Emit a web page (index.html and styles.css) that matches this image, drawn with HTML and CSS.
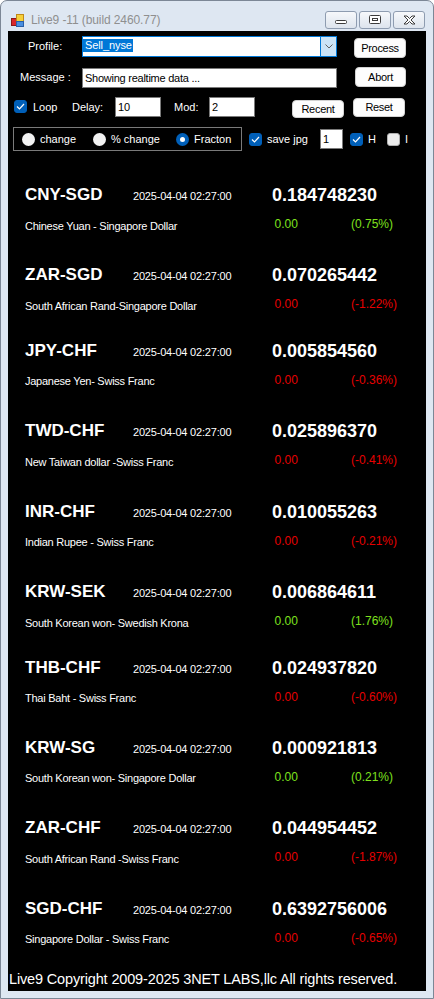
FILE: index.html
```html
<!DOCTYPE html>
<html lang="en">
<head>
  <meta charset="UTF-8">
  <title>Live9 -11 (build 2460.77)</title>
  <meta name="viewport" content="width=device-width, initial-scale=1.0">
  <link rel="stylesheet" href="styles.css">
</head>
<body>

  <div class="window">
    <div class="titlebar">
      <svg class="app-icon" width="14" height="16" viewBox="0 0 14 16">
        <rect x="0.5" y="6.5" width="5" height="7" fill="#d9262a" stroke="#8b1a1a"/>
        <rect x="5.5" y="2.5" width="7" height="7" fill="#f6d03a" stroke="#c08a1a"/>
        <rect x="5.5" y="9.5" width="7" height="5" fill="#4a8fe0" stroke="#2a5fa8"/>
      </svg>
      <span class="title">Live9 -11 (build 2460.77)</span>
      <div class="caption">
        <span class="cap-btn">
          <svg width="12" height="10" viewBox="0 0 12 10"><rect x="0.5" y="5.5" width="11" height="3" rx="1" fill="#fff" stroke="#3c3c3c"/></svg>
        </span>
        <span class="cap-btn">
          <svg width="12" height="10" viewBox="0 0 12 10"><rect x="0.5" y="0.5" width="11" height="8" rx="1" fill="#fff" stroke="#3c3c3c"/><rect x="3.5" y="3.5" width="5" height="2" fill="none" stroke="#3c3c3c"/></svg>
        </span>
        <span class="cap-btn">
          <svg width="13" height="10" viewBox="0 0 13 10"><path d="M1 1h3l2.5 2.5L9 1h3L8 5l4 4H9L6.5 6.5 4 9H1l4-4z" fill="#fff" stroke="#3c3c3c" stroke-linejoin="round"/></svg>
        </span>
      </div>
    </div>

    <div class="client">
      <div class="row row-profile">
        <span class="lbl lbl-profile">Profile:</span>
        <div class="combo">
          <span class="combo-text"><span class="sel">Sell_nyse</span></span>
          <span class="combo-drop">
            <svg width="8" height="5" viewBox="0 0 8 5"><path d="M0.5 0.5L4 4L7.5 0.5" fill="none" stroke="#606060"/></svg>
          </span>
        </div>
        <span class="btn btn-process">Process</span>
      </div>

      <div class="row row-msg">
        <span class="lbl lbl-msg">Message :</span>
        <div class="field field-msg">Showing realtime data ...</div>
        <span class="btn btn-abort">Abort</span>
      </div>

      <div class="row row-opts">
        <span class="check checked check-loop">
          <svg width="9" height="7" viewBox="0 0 9 7"><path d="M1 3.5L3.5 6L8 1" fill="none" stroke="#fff" stroke-width="1.2"/></svg>
        </span>
        <span class="lbl lbl-loop">Loop</span>
        <span class="lbl lbl-delay">Delay:</span>
        <div class="field field-num">10</div>
        <span class="lbl lbl-mod">Mod:</span>
        <div class="field field-num">2</div>
        <span class="btn btn-recent">Recent</span>
        <span class="btn btn-reset">Reset</span>
      </div>

      <div class="row row-mode">
        <div class="group">
          <span class="opt opt-change"><span class="radio"></span>change</span>
          <span class="opt opt-pct"><span class="radio"></span>% change</span>
          <span class="opt"><span class="radio on"></span>Fracton</span>
        </div>
        <span class="opt opt-save">
          <span class="check checked"><svg width="9" height="7" viewBox="0 0 9 7"><path d="M1 3.5L3.5 6L8 1" fill="none" stroke="#fff" stroke-width="1.2"/></svg></span>
          save jpg
        </span>
        <div class="field field-count">1</div>
        <span class="opt opt-h">
          <span class="check checked"><svg width="9" height="7" viewBox="0 0 9 7"><path d="M1 3.5L3.5 6L8 1" fill="none" stroke="#fff" stroke-width="1.2"/></svg></span>
          H
        </span>
        <span class="opt"><span class="check"></span>I</span>
      </div>

      <div class="quotes">
        <div class="quote">
          <div class="q-top"><span class="pair">CNY-SGD</span><span class="stamp">2025-04-04 02:27:00</span><span class="rate">0.184748230</span></div>
          <div class="q-bottom"><span class="desc">Chinese Yuan - Singapore Dollar</span><span class="chg up">0.00</span><span class="pct up">(0.75%)</span></div>
        </div>
        <div class="quote tight">
          <div class="q-top"><span class="pair">ZAR-SGD</span><span class="stamp">2025-04-04 02:27:00</span><span class="rate">0.070265442</span></div>
          <div class="q-bottom"><span class="desc">South African Rand-Singapore Dollar</span><span class="chg down">0.00</span><span class="pct down">(-1.22%)</span></div>
        </div>
        <div class="quote">
          <div class="q-top"><span class="pair">JPY-CHF</span><span class="stamp">2025-04-04 02:27:00</span><span class="rate">0.005854560</span></div>
          <div class="q-bottom"><span class="desc">Japanese Yen- Swiss Franc</span><span class="chg down">0.00</span><span class="pct down">(-0.36%)</span></div>
        </div>
        <div class="quote">
          <div class="q-top"><span class="pair">TWD-CHF</span><span class="stamp">2025-04-04 02:27:00</span><span class="rate">0.025896370</span></div>
          <div class="q-bottom"><span class="desc">New Taiwan dollar -Swiss Franc</span><span class="chg down">0.00</span><span class="pct down">(-0.41%)</span></div>
        </div>
        <div class="quote">
          <div class="q-top"><span class="pair">INR-CHF</span><span class="stamp">2025-04-04 02:27:00</span><span class="rate">0.010055263</span></div>
          <div class="q-bottom"><span class="desc">Indian Rupee - Swiss Franc</span><span class="chg down">0.00</span><span class="pct down">(-0.21%)</span></div>
        </div>
        <div class="quote tight">
          <div class="q-top"><span class="pair">KRW-SEK</span><span class="stamp">2025-04-04 02:27:00</span><span class="rate">0.006864611</span></div>
          <div class="q-bottom"><span class="desc">South Korean won- Swedish Krona</span><span class="chg up">0.00</span><span class="pct up">(1.76%)</span></div>
        </div>
        <div class="quote">
          <div class="q-top"><span class="pair">THB-CHF</span><span class="stamp">2025-04-04 02:27:00</span><span class="rate">0.024937820</span></div>
          <div class="q-bottom"><span class="desc">Thai Baht - Swiss Franc</span><span class="chg down">0.00</span><span class="pct down">(-0.60%)</span></div>
        </div>
        <div class="quote">
          <div class="q-top"><span class="pair">KRW-SG</span><span class="stamp">2025-04-04 02:27:00</span><span class="rate">0.000921813</span></div>
          <div class="q-bottom"><span class="desc">South Korean won- Singapore Dollar</span><span class="chg up">0.00</span><span class="pct up">(0.21%)</span></div>
        </div>
        <div class="quote">
          <div class="q-top"><span class="pair">ZAR-CHF</span><span class="stamp">2025-04-04 02:27:00</span><span class="rate">0.044954452</span></div>
          <div class="q-bottom"><span class="desc">South African Rand -Swiss Franc</span><span class="chg down">0.00</span><span class="pct down">(-1.87%)</span></div>
        </div>
        <div class="quote">
          <div class="q-top"><span class="pair">SGD-CHF</span><span class="stamp">2025-04-04 02:27:00</span><span class="rate">0.6392756006</span></div>
          <div class="q-bottom"><span class="desc">Singapore Dollar - Swiss Franc</span><span class="chg down">0.00</span><span class="pct down">(-0.65%)</span></div>
        </div>
      </div>

      <div class="footer">Live9 Copyright 2009-2025 3NET LABS,llc All rights reserved.</div>
    </div>
  </div>

</body>
</html>
```

FILE: styles.css
```css
* {
  box-sizing: border-box;
}

body {
  margin: 0;
  font-family: "Liberation Sans", Arial, sans-serif;
  background: #fff;
}

.window {
  width: 434px;
  height: 999px;
  border: 1px solid #7c8796;
  border-radius: 7px 7px 0 0;
  background: #dee7f2;
  padding: 0 7px 7px;
  display: flex;
  flex-direction: column;
}

/* title bar */
.titlebar {
  height: 30px;
  padding-top: 7px;
  display: flex;
  align-items: center;
}

.app-icon {
  margin-left: 3px;
}

.title {
  margin-left: 6px;
  font-size: 12px;
  color: #8f8f8f;
  letter-spacing: -0.1px;
}

.caption {
  margin-left: auto;
  margin-right: 1px;
  display: flex;
  gap: 2px;
}

.cap-btn {
  width: 32px;
  height: 18px;
  border: 1px solid #8e9cb0;
  border-radius: 3px;
  background: linear-gradient(#f6f8fb, #dde4ed);
  display: flex;
  align-items: center;
  justify-content: center;
}

/* client area */
.client {
  flex: 1;
  background: #000;
  color: #fff;
  font-size: 11px;
  line-height: 13px;
  overflow: hidden;
}

.row {
  display: flex;
  align-items: flex-start;
}

.lbl {
  margin-top: 4px;
}

.btn {
  background: #fdfdfd;
  border: 1px solid #d2d2d2;
  border-radius: 4px;
  color: #000;
  font-size: 11px;
  letter-spacing: -0.3px;
  display: flex;
  align-items: center;
  justify-content: center;
}

.field {
  background: #fff;
  color: #000;
  border: 1px solid #7a7a7a;
  height: 20px;
  padding: 3px 0 0 2px;
}

.row-profile {
  margin-top: 5px;
  height: 22px;
}

.lbl-profile {
  margin-left: 20px;
  width: 54px;
}

.combo {
  width: 255px;
  height: 21px;
  border: 1px solid #0078d7;
  background: #fff;
  display: flex;
}

.combo-text {
  flex: 1;
  padding: 2px 0 0 0;
}

.sel {
  display: inline-block;
  background: #0078d7;
  color: #fff;
  padding: 0 1px 0 2px;
  letter-spacing: -0.1px;
}

.combo-drop {
  width: 16px;
  border-left: 1px solid #0078d7;
  background: #cce4f7;
  display: flex;
  align-items: center;
  justify-content: center;
}

.btn-process {
  margin: 2px 0 0 17px;
  width: 52px;
  height: 20px;
}

.row-msg {
  margin-top: 9px;
  height: 21px;
}

.lbl-msg {
  margin-left: 12px;
  width: 62px;
}

.field-msg {
  width: 255px;
  margin-top: 1px;
  letter-spacing: -0.25px;
}

.btn-abort {
  margin-left: 18px;
  width: 51px;
  height: 20px;
}

.row-opts {
  margin-top: 9px;
  height: 21px;
}

.check {
  width: 13px;
  height: 13px;
  border-radius: 3px;
  background: #ececec;
  border: 1px solid #b0b0b0;
  display: flex;
  align-items: center;
  justify-content: center;
  flex-shrink: 0;
}

.check.checked {
  background: #005fb8;
  border-color: #005fb8;
}

.check-loop {
  margin: 3px 0 0 6px;
}

.lbl-loop {
  margin-left: 6px;
  width: 39px;
}

.lbl-delay {
  width: 43px;
}

.field-num {
  width: 46px;
}

.lbl-mod {
  margin-left: 13px;
  width: 35px;
}

.btn-recent {
  margin: 3px 0 0 37px;
  width: 52px;
  height: 18px;
}

.btn-reset {
  margin: 1px 0 0 9px;
  width: 52px;
  height: 19px;
}

.row-mode {
  margin-top: 9px;
  height: 24px;
  align-items: center;
}

.group {
  margin-left: 5px;
  width: 229px;
  height: 24px;
  border: 1px solid #7a7a7a;
  padding-left: 8px;
  display: flex;
  align-items: center;
}

.opt {
  display: flex;
  align-items: center;
  gap: 5px;
}

.opt-change {
  width: 71px;
}

.opt-pct {
  width: 83px;
}

.radio {
  width: 13px;
  height: 13px;
  border-radius: 50%;
  background: #f2f2f2;
  display: flex;
  align-items: center;
  justify-content: center;
}

.radio.on {
  background: #005fb8;
}

.radio.on::after {
  content: "";
  width: 5px;
  height: 5px;
  border-radius: 50%;
  background: #fff;
}

.opt-save {
  margin-left: 7px;
  width: 71px;
}

.field-count {
  width: 23px;
}

.opt-h {
  margin-left: 7px;
  width: 37px;
}

/* quotes */
.quotes {
  margin-top: 34px;
}

.quote {
  height: 80.4px;
  padding-left: 17px;
  display: flex;
  flex-direction: column;
}

.quote.tight {
  height: 75.5px;
}

.quote:last-child {
  height: 72px;
}

.q-top {
  display: flex;
  align-items: flex-start;
  height: 20px;
}

.pair {
  width: 108px;
  font-size: 17px;
  font-weight: bold;
  line-height: 20px;
}

.stamp {
  width: 139px;
  margin-top: 5px;
  letter-spacing: -0.2px;
}

.rate {
  font-size: 18px;
  font-weight: bold;
  line-height: 20px;
}

.q-bottom {
  display: flex;
  align-items: flex-start;
  margin-top: 12px;
}

.desc {
  width: 249.5px;
  margin-top: 2.5px;
  letter-spacing: -0.25px;
}

.chg {
  width: 76.5px;
  font-size: 12px;
  line-height: 14px;
}

.pct {
  font-size: 12px;
  line-height: 14px;
}

.up {
  color: #7ee01e;
}

.down {
  color: #e60000;
}

.footer {
  padding-left: 1px;
  font-size: 14.5px;
  line-height: 17px;
  letter-spacing: -0.15px;
}
```
